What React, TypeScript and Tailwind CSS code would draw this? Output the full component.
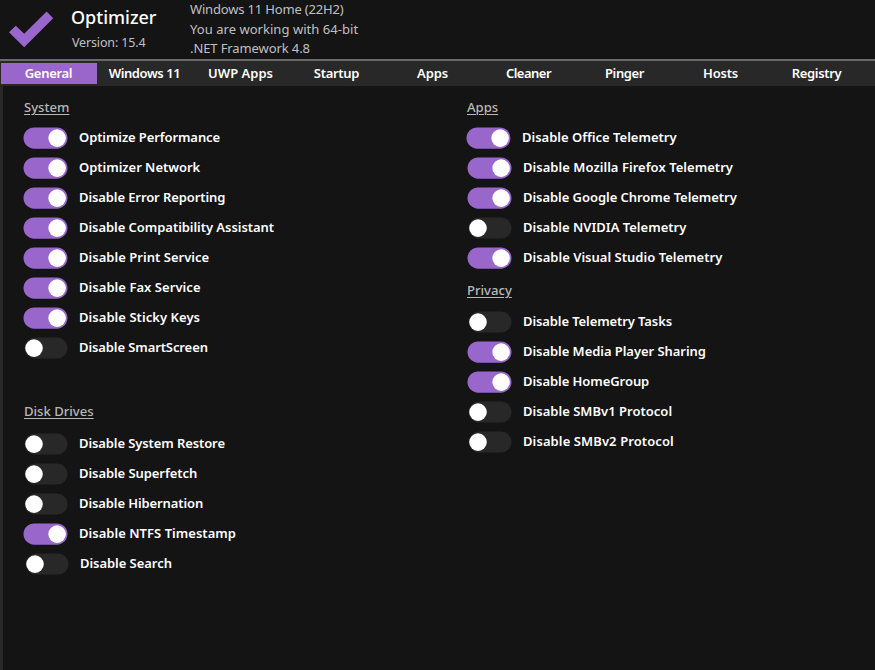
const tabs = [
  { label: "General", tracking: "tracking-[-0.3px]" },
  { label: "Windows 11", tracking: "tracking-[-0.4px]" },
  { label: "UWP Apps", tracking: "tracking-[0px]" },
  { label: "Startup", tracking: "tracking-[-0.3px]" },
  { label: "Apps", tracking: "tracking-[-0.15px]" },
  { label: "Cleaner", tracking: "tracking-[-0.5px]" },
  { label: "Pinger", tracking: "tracking-[-0.4px]" },
  { label: "Hosts", tracking: "tracking-[-0.2px]" },
  { label: "Registry", tracking: "tracking-[-0.35px]" },
];

type Option = { label: string; on: boolean; shift?: string; tracking?: string };

const system: Option[] = [
  { label: "Optimize Performance", on: true, tracking: "tracking-[-0.1px]" },
  { label: "Optimizer Network", on: true, tracking: "tracking-[-0.03px]" },
  { label: "Disable Error Reporting", on: true, tracking: "tracking-[-0.1px]" },
  { label: "Disable Compatibility Assistant", on: true, tracking: "tracking-[-0.05px]" },
  { label: "Disable Print Service", on: true, tracking: "tracking-[0.03px]" },
  { label: "Disable Fax Service", on: true, tracking: "tracking-[0.05px]" },
  { label: "Disable Sticky Keys", on: true, tracking: "tracking-[0.05px]" },
  { label: "Disable SmartScreen", on: false, tracking: "tracking-[-0.1px]" },
];

const drives: Option[] = [
  { label: "Disable System Restore", on: false, tracking: "tracking-[-0.1px]" },
  { label: "Disable Superfetch", on: false, tracking: "tracking-[-0.07px]" },
  { label: "Disable Hibernation", on: false, tracking: "tracking-[-0.1px]" },
  { label: "Disable NTFS Timestamp", on: true, tracking: "tracking-[0.03px]" },
  { label: "Disable Search", on: false, shift: "ml-px", tracking: "tracking-[-0.05px]" },
];

const apps: Option[] = [
  { label: "Disable Office Telemetry", on: true, shift: "-ml-px" },
  { label: "Disable Mozilla Firefox Telemetry", on: true, tracking: "tracking-[0.04px]" },
  { label: "Disable Google Chrome Telemetry", on: true, tracking: "tracking-[-0.05px]" },
  { label: "Disable NVIDIA Telemetry", on: false },
  { label: "Disable Visual Studio Telemetry", on: true, tracking: "tracking-[0.02px]" },
];

const privacy: Option[] = [
  { label: "Disable Telemetry Tasks", on: false, tracking: "tracking-[-0.1px]" },
  { label: "Disable Media Player Sharing", on: true, tracking: "tracking-[-0.05px]" },
  { label: "Disable HomeGroup", on: true, tracking: "tracking-[-0.06px]" },
  { label: "Disable SMBv1 Protocol", on: false, tracking: "tracking-[0.02px]" },
  { label: "Disable SMBv2 Protocol", on: false, tracking: "tracking-[0.1px]" },
];

function Toggle({ on }: { on: boolean }) {
  return (
    <svg width="46" height="24" viewBox="0 0 46 24" className="shrink-0">
      {on ? (
        <>
          <rect x="0.5" y="1.4" width="44" height="21.3" rx="10.65" fill="#9966cc" />
          <circle cx="34.1" cy="12.1" r="8.8" fill="#fff" />
        </>
      ) : (
        <>
          <rect x="1.6" y="1.6" width="43" height="21" rx="10.5" fill="#282828" />
          <circle cx="11" cy="12.1" r="8.8" fill="#fff" />
        </>
      )}
    </svg>
  );
}

function Group({ title, options, className }: { title: string; options: Option[]; className: string }) {
  return (
    <section>
      <h2 className={`h-[18px] whitespace-nowrap text-[13.1px] font-medium leading-[18px] text-[#b8b8b8] underline decoration-1 underline-offset-2 ${className}`}>
        {title}
      </h2>
      {options.map((o) => (
        <div key={o.label} className={`flex h-[30px] items-center ${o.shift ?? ""}`}>
          <Toggle on={o.on} />
          <span className={`ml-2.5 whitespace-nowrap pb-[2px] text-[13px] font-semibold leading-[18px] text-white ${o.tracking ?? ""}`}>{o.label}</span>
        </div>
      ))}
    </section>
  );
}

export default function App() {
  return (
    <div className="flex h-[670px] w-[875px] flex-col overflow-hidden bg-[#141414] font-['Noto_Sans',sans-serif]">
      <header className="flex h-[59px] shrink-0 text-[13px] text-[#c0c0c0]">
        <svg width="71" height="59" viewBox="0 0 71 59" className="shrink-0">
          <path d="M9 32.3 L15.8 25.7 L24.2 33.8 L46.6 11.5 L53.2 18.2 L24.2 47.2 Z" fill="#9966cc" />
        </svg>
        <div className="w-[119px] whitespace-nowrap">
          <h1 className="mt-[3px] h-[28px] text-[18px] font-medium leading-[28px] text-white">Optimizer</h1>
          <p className="ml-px mt-[2px] text-[12.5px] leading-[19px] tracking-[-0.15px]">Version: 15.4</p>
        </div>
        <div className="whitespace-nowrap leading-[19.5px]">
          <p className="tracking-[-0.17px]">Windows 11 Home (22H2)</p>
          <p className="tracking-[0.04px]">You are working with 64-bit</p>
          <p className="tracking-[-0.1px]">.NET Framework 4.8</p>
        </div>
      </header>
      <nav className="flex h-[27px] shrink-0 border-t-2 border-[#696969] bg-[#282828] pl-px pt-[2px]">
        {tabs.map((t, i) => (
          <button
            key={t.label}
            className={`flex h-[21px] w-[96px] items-center justify-center whitespace-nowrap pr-px text-[13px] font-semibold leading-[19px] text-white ${t.tracking} ${i === 0 ? "bg-[#9966cc]" : ""}`}
          >
            {t.label}
          </button>
        ))}
      </nav>
      <main className="flex flex-1 border-l-[3px] border-[#282828] pl-5 pt-[12px]">
        <div className="w-[443px]">
          <Group title="System" options={system} className="mb-[7px] ml-px" />
          <div className="h-[39px]" />
          <Group title="Disk Drives" options={drives} className="mb-[9px] ml-px" />
        </div>
        <div className="pl-px">
          <Group title="Apps" options={apps} className="mb-[7px]" />
          <div className="h-[8px]" />
          <Group title="Privacy" options={privacy} className="mb-[8px]" />
        </div>
      </main>
    </div>
  );
}
